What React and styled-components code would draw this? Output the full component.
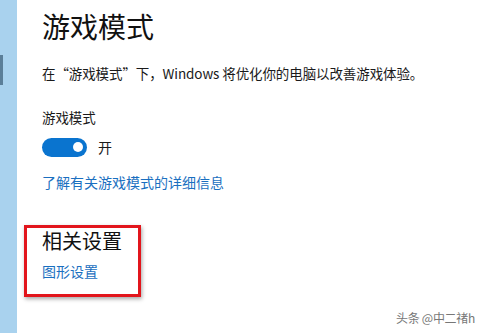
import React, {useState} from 'react';
import styled, {createGlobalStyle} from 'styled-components';

const GlobalStyle = createGlobalStyle`
    html, body {
        margin: 0;
        padding: 0;
        width: 487px;
        height: 333px;
        overflow: hidden;
        background: #ffffff;
        font-family: "Noto Sans CJK SC", "Noto Sans", sans-serif;
    }
`;

const Page = styled.div`
    position: relative;
    width: 487px;
    height: 333px;
    display: flex;
    background: #ffffff;
`;

const SideStrip = styled.div`
    position: relative;
    width: 17px;
    height: 100%;
    background: #a9d2ee;

    .marker {
        position: absolute;
        left: 0;
        top: 55px;
        width: 3px;
        height: 30px;
        background: #5b7f99;
    }
`;

const Content = styled.div`
    flex: 1;
    padding: 8px 0 0 25px;
    display: flex;
    flex-direction: column;
    align-items: flex-start;
`;

const Title = styled.h1`
    margin: 0;
    font-size: 28px;
    line-height: 36px;
    font-weight: 400;
    color: #111;
`;

const Text = styled.div`
    margin-top: ${p => p.$top || 0}px;
    font-size: 13.5px;
    line-height: 20px;
    color: #1a1a1a;
    white-space: nowrap;
    letter-spacing: -0.1px;
`;

const Link = styled.a`
    display: block;
    margin-top: ${p => p.$top || 0}px;
    font-size: 14px;
    line-height: 20px;
    color: #1a6fc0;
    text-decoration: none;
    cursor: pointer;
`;

const ToggleRow = styled.div`
    margin-top: 10px;
    display: flex;
    align-items: center;
    gap: 11px;
    height: 20px;
`;

const Track = styled.button`
    width: 45px;
    height: 19px;
    border: none;
    border-radius: 10px;
    padding: 0 4px;
    background: ${p => p.$on ? '#0a74cf' : '#ffffff'};
    box-shadow: ${p => p.$on ? 'none' : 'inset 0 0 0 2px #333'};
    display: flex;
    align-items: center;
    justify-content: ${p => p.$on ? 'flex-end' : 'flex-start'};
    cursor: pointer;

    &::after {
        content: '';
        width: 10px;
        height: 10px;
        border-radius: 50%;
        background: ${p => p.$on ? '#ffffff' : '#333'};
    }
`;

const ToggleLabel = styled.span`
    font-size: 14px;
    line-height: 20px;
    color: #1a1a1a;
`;

const RelatedBox = styled.section`
    margin: 33px 0 0 -18px;
    width: 96px;
    padding: 0 0 13px 15px;
    border: 3px solid #e2151c;
    box-shadow: 1px 2px 4px rgba(0, 0, 0, 0.35);
`;

const SubTitle = styled.h2`
    margin: 0;
    font-size: 20px;
    line-height: 26px;
    font-weight: 400;
    color: #111;
`;

const Watermark = styled.div`
    position: absolute;
    right: 12px;
    bottom: 7px;
    font-size: 12px;
    color: #777;
    letter-spacing: -0.3px;
`;

const App = () => {
    const [on, setOn] = useState(true);

    return (
        <Page>
            <GlobalStyle />
            <SideStrip><div className="marker" /></SideStrip>

            <Content>
                <Title>游戏模式</Title>
                <Text $top={19}>在“游戏模式”下，Windows 将优化你的电脑以改善游戏体验。</Text>
                <Text $top={24}>游戏模式</Text>
                <ToggleRow>
                    <Track $on={on} onClick={() => setOn(!on)} />
                    <ToggleLabel>{on ? '开' : '关'}</ToggleLabel>
                </ToggleRow>
                <Link $top={15}>了解有关游戏模式的详细信息</Link>

                <RelatedBox>
                    <SubTitle>相关设置</SubTitle>
                    <Link $top={7}>图形设置</Link>
                </RelatedBox>
            </Content>

            <Watermark>头条 @中二禇h</Watermark>
        </Page>
    );
};

export default App;
